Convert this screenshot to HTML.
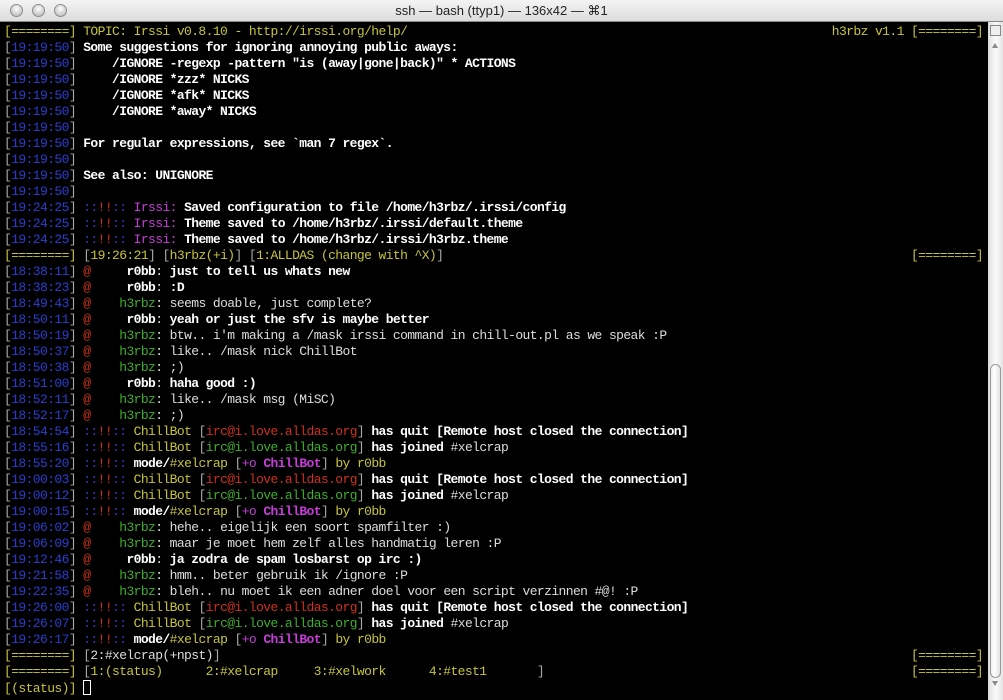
<!DOCTYPE html>
<html><head><meta charset="utf-8">
<style>
html,body{margin:0;padding:0;width:1003px;height:700px;overflow:hidden;background:#000}
.title{position:absolute;left:0;top:0;width:1003px;height:22px;background:linear-gradient(#f4f4f4,#dcdcdc);border-bottom:1px solid #8a8a8a;box-sizing:border-box;font-family:"Liberation Sans",sans-serif;font-size:13px;color:#222;text-align:center;line-height:22px}
.btn{position:absolute;top:4px;width:13px;height:13px;border-radius:50%;background:radial-gradient(circle at 50% 35%,#fdfdfd,#c8c8c8 70%,#a8a8a8);border:1px solid #8d8d8d;box-sizing:border-box}
.term{position:absolute;left:4px;top:24px;font-family:"Liberation Mono",monospace;font-size:13px;letter-spacing:-0.6px;line-height:16px;color:#ddd;white-space:normal}
.row{height:16px;width:979px;display:flex;justify-content:space-between;white-space:pre}
.g{color:#a8a8a8}.b{color:#2b3fd0}.y{color:#c6c43e}.w{color:#fff;font-weight:bold}.l{color:#ddd}.gr{color:#40ae2e}.r{color:#d0301e}.m{color:#c43fd6}.mb{color:#c43fd6;font-weight:bold}
.sb{position:absolute;left:988px;top:22px;width:15px;height:678px;background:linear-gradient(90deg,#dcdcdc,#fafafa 50%,#e4e4e4)}
.thumb{position:absolute;left:990px;top:364px;width:11px;height:314px;border-radius:6px;border:1px solid #9a9a9a;box-sizing:border-box;background:linear-gradient(90deg,#f0f0f0,#fff 40%,#e2e2e2)}
.cur{display:inline-block;width:6px;height:13px;border:1px solid #fff;vertical-align:-3px}
</style></head><body>
<div class="title"><div class="btn" style="left:10px"></div><div class="btn" style="left:32px"></div><div class="btn" style="left:54px"></div>ssh — bash (ttyp1) — 136x42 — ⌘1</div>
<div class="sb"></div>
<div style="position:absolute;left:990px;top:25px;width:11px;height:11px;border:1px solid #888;box-sizing:border-box;background:#eee"></div>
<div style="position:absolute;left:992px;top:43px;width:0;height:0;border-left:3px solid transparent;border-right:3px solid transparent;border-bottom:5px solid #888"></div>
<div class="thumb"></div>
<div style="position:absolute;left:992px;top:681px;width:0;height:0;border-left:3px solid transparent;border-right:3px solid transparent;border-top:5px solid #888"></div>
<div class="term">
<div class="row"><span><span class="y">[========] TOPIC: Irssi v0.8.10 - http://irssi.org/help/</span></span><span class="y">h3rbz v1.1 [========]</span></div>
<div class="row"><span><span class="g">[</span><span class="b">19:19:50</span><span class="g">]</span> <span class="w">Some suggestions for ignoring annoying public aways:</span></span></div>
<div class="row"><span><span class="g">[</span><span class="b">19:19:50</span><span class="g">]</span> <span class="w">    /IGNORE -regexp -pattern "is (away|gone|back)" * ACTIONS</span></span></div>
<div class="row"><span><span class="g">[</span><span class="b">19:19:50</span><span class="g">]</span> <span class="w">    /IGNORE *zzz* NICKS</span></span></div>
<div class="row"><span><span class="g">[</span><span class="b">19:19:50</span><span class="g">]</span> <span class="w">    /IGNORE *afk* NICKS</span></span></div>
<div class="row"><span><span class="g">[</span><span class="b">19:19:50</span><span class="g">]</span> <span class="w">    /IGNORE *away* NICKS</span></span></div>
<div class="row"><span><span class="g">[</span><span class="b">19:19:50</span><span class="g">]</span></span></div>
<div class="row"><span><span class="g">[</span><span class="b">19:19:50</span><span class="g">]</span> <span class="w">For regular expressions, see `man 7 regex`.</span></span></div>
<div class="row"><span><span class="g">[</span><span class="b">19:19:50</span><span class="g">]</span></span></div>
<div class="row"><span><span class="g">[</span><span class="b">19:19:50</span><span class="g">]</span> <span class="w">See also: UNIGNORE</span></span></div>
<div class="row"><span><span class="g">[</span><span class="b">19:19:50</span><span class="g">]</span></span></div>
<div class="row"><span><span class="g">[</span><span class="b">19:24:25</span><span class="g">]</span> <span class="b">::</span><span class="r">!!</span><span class="b">::</span> <span class="m">Irssi:</span> <span class="w">Saved configuration to file /home/h3rbz/.irssi/config</span></span></div>
<div class="row"><span><span class="g">[</span><span class="b">19:24:25</span><span class="g">]</span> <span class="b">::</span><span class="r">!!</span><span class="b">::</span> <span class="m">Irssi:</span> <span class="w">Theme saved to /home/h3rbz/.irssi/default.theme</span></span></div>
<div class="row"><span><span class="g">[</span><span class="b">19:24:25</span><span class="g">]</span> <span class="b">::</span><span class="r">!!</span><span class="b">::</span> <span class="m">Irssi:</span> <span class="w">Theme saved to /home/h3rbz/.irssi/h3rbz.theme</span></span></div>
<div class="row"><span><span class="y">[========]</span> <span class="g">[</span><span class="y">19:26:21</span><span class="g">]</span> <span class="g">[</span><span class="y">h3rbz(+i)</span><span class="g">]</span> <span class="g">[</span><span class="y">1:ALLDAS (change with ^X)</span><span class="g">]</span></span><span class="y">[========]</span></div>
<div class="row"><span><span class="g">[</span><span class="b">18:38:11</span><span class="g">]</span> <span class="r">@</span>     <span class="w">r0bb</span><span class="l">:</span> <span class="w">just to tell us whats new</span></span></div>
<div class="row"><span><span class="g">[</span><span class="b">18:38:23</span><span class="g">]</span> <span class="r">@</span>     <span class="w">r0bb</span><span class="l">:</span> <span class="w">:D</span></span></div>
<div class="row"><span><span class="g">[</span><span class="b">18:49:43</span><span class="g">]</span> <span class="r">@</span>    <span class="gr">h3rbz</span><span class="l">: seems doable, just complete?</span></span></div>
<div class="row"><span><span class="g">[</span><span class="b">18:50:11</span><span class="g">]</span> <span class="r">@</span>     <span class="w">r0bb</span><span class="l">:</span> <span class="w">yeah or just the sfv is maybe better</span></span></div>
<div class="row"><span><span class="g">[</span><span class="b">18:50:19</span><span class="g">]</span> <span class="r">@</span>    <span class="gr">h3rbz</span><span class="l">: btw.. i'm making a /mask irssi command in chill-out.pl as we speak :P</span></span></div>
<div class="row"><span><span class="g">[</span><span class="b">18:50:37</span><span class="g">]</span> <span class="r">@</span>    <span class="gr">h3rbz</span><span class="l">: like.. /mask nick ChillBot</span></span></div>
<div class="row"><span><span class="g">[</span><span class="b">18:50:38</span><span class="g">]</span> <span class="r">@</span>    <span class="gr">h3rbz</span><span class="l">: ;)</span></span></div>
<div class="row"><span><span class="g">[</span><span class="b">18:51:00</span><span class="g">]</span> <span class="r">@</span>     <span class="w">r0bb</span><span class="l">:</span> <span class="w">haha good :)</span></span></div>
<div class="row"><span><span class="g">[</span><span class="b">18:52:11</span><span class="g">]</span> <span class="r">@</span>    <span class="gr">h3rbz</span><span class="l">: like.. /mask msg (MiSC)</span></span></div>
<div class="row"><span><span class="g">[</span><span class="b">18:52:17</span><span class="g">]</span> <span class="r">@</span>    <span class="gr">h3rbz</span><span class="l">: ;)</span></span></div>
<div class="row"><span><span class="g">[</span><span class="b">18:54:54</span><span class="g">]</span> <span class="b">::</span><span class="r">!!</span><span class="b">::</span> <span class="y">ChillBot</span> <span class="g">[</span><span class="r">irc@i.love.alldas.org</span><span class="g">]</span> <span class="w">has quit [Remote host closed the connection]</span></span></div>
<div class="row"><span><span class="g">[</span><span class="b">18:55:16</span><span class="g">]</span> <span class="b">::</span><span class="r">!!</span><span class="b">::</span> <span class="y">ChillBot</span> <span class="g">[</span><span class="gr">irc@i.love.alldas.org</span><span class="g">]</span> <span class="w">has joined</span> <span class="l">#xelcrap</span></span></div>
<div class="row"><span><span class="g">[</span><span class="b">18:55:20</span><span class="g">]</span> <span class="b">::</span><span class="r">!!</span><span class="b">::</span> <span class="w">mode/</span><span class="y">#xelcrap</span> <span class="g">[</span><span class="m">+o </span><span class="mb">ChillBot</span><span class="g">]</span><span class="y"> by r0bb</span></span></div>
<div class="row"><span><span class="g">[</span><span class="b">19:00:03</span><span class="g">]</span> <span class="b">::</span><span class="r">!!</span><span class="b">::</span> <span class="y">ChillBot</span> <span class="g">[</span><span class="r">irc@i.love.alldas.org</span><span class="g">]</span> <span class="w">has quit [Remote host closed the connection]</span></span></div>
<div class="row"><span><span class="g">[</span><span class="b">19:00:12</span><span class="g">]</span> <span class="b">::</span><span class="r">!!</span><span class="b">::</span> <span class="y">ChillBot</span> <span class="g">[</span><span class="gr">irc@i.love.alldas.org</span><span class="g">]</span> <span class="w">has joined</span> <span class="l">#xelcrap</span></span></div>
<div class="row"><span><span class="g">[</span><span class="b">19:00:15</span><span class="g">]</span> <span class="b">::</span><span class="r">!!</span><span class="b">::</span> <span class="w">mode/</span><span class="y">#xelcrap</span> <span class="g">[</span><span class="m">+o </span><span class="mb">ChillBot</span><span class="g">]</span><span class="y"> by r0bb</span></span></div>
<div class="row"><span><span class="g">[</span><span class="b">19:06:02</span><span class="g">]</span> <span class="r">@</span>    <span class="gr">h3rbz</span><span class="l">: hehe.. eigelijk een soort spamfilter :)</span></span></div>
<div class="row"><span><span class="g">[</span><span class="b">19:06:09</span><span class="g">]</span> <span class="r">@</span>    <span class="gr">h3rbz</span><span class="l">: maar je moet hem zelf alles handmatig leren :P</span></span></div>
<div class="row"><span><span class="g">[</span><span class="b">19:12:46</span><span class="g">]</span> <span class="r">@</span>     <span class="w">r0bb</span><span class="l">:</span> <span class="w">ja zodra de spam losbarst op irc :)</span></span></div>
<div class="row"><span><span class="g">[</span><span class="b">19:21:58</span><span class="g">]</span> <span class="r">@</span>    <span class="gr">h3rbz</span><span class="l">: hmm.. beter gebruik ik /ignore :P</span></span></div>
<div class="row"><span><span class="g">[</span><span class="b">19:22:35</span><span class="g">]</span> <span class="r">@</span>    <span class="gr">h3rbz</span><span class="l">: bleh.. nu moet ik een adner doel voor een script verzinnen #@! :P</span></span></div>
<div class="row"><span><span class="g">[</span><span class="b">19:26:00</span><span class="g">]</span> <span class="b">::</span><span class="r">!!</span><span class="b">::</span> <span class="y">ChillBot</span> <span class="g">[</span><span class="r">irc@i.love.alldas.org</span><span class="g">]</span> <span class="w">has quit [Remote host closed the connection]</span></span></div>
<div class="row"><span><span class="g">[</span><span class="b">19:26:07</span><span class="g">]</span> <span class="b">::</span><span class="r">!!</span><span class="b">::</span> <span class="y">ChillBot</span> <span class="g">[</span><span class="gr">irc@i.love.alldas.org</span><span class="g">]</span> <span class="w">has joined</span> <span class="l">#xelcrap</span></span></div>
<div class="row"><span><span class="g">[</span><span class="b">19:26:17</span><span class="g">]</span> <span class="b">::</span><span class="r">!!</span><span class="b">::</span> <span class="w">mode/</span><span class="y">#xelcrap</span> <span class="g">[</span><span class="m">+o </span><span class="mb">ChillBot</span><span class="g">]</span><span class="y"> by r0bb</span></span></div>
<div class="row"><span><span class="y">[========]</span> <span class="g">[</span><span class="l">2:#xelcrap(+npst)</span><span class="g">]</span></span><span class="y">[========]</span></div>
<div class="row"><span><span class="y">[========]</span> <span class="g">[</span><span class="y">1:(status)      2:#xelcrap     3:#xelwork      4:#test1       </span><span class="g">]</span></span><span class="y">[========]</span></div>
<div class="row"><span><span class="y">[(status)]</span> <span class="cur"></span></span></div>
</div>
</body></html>
